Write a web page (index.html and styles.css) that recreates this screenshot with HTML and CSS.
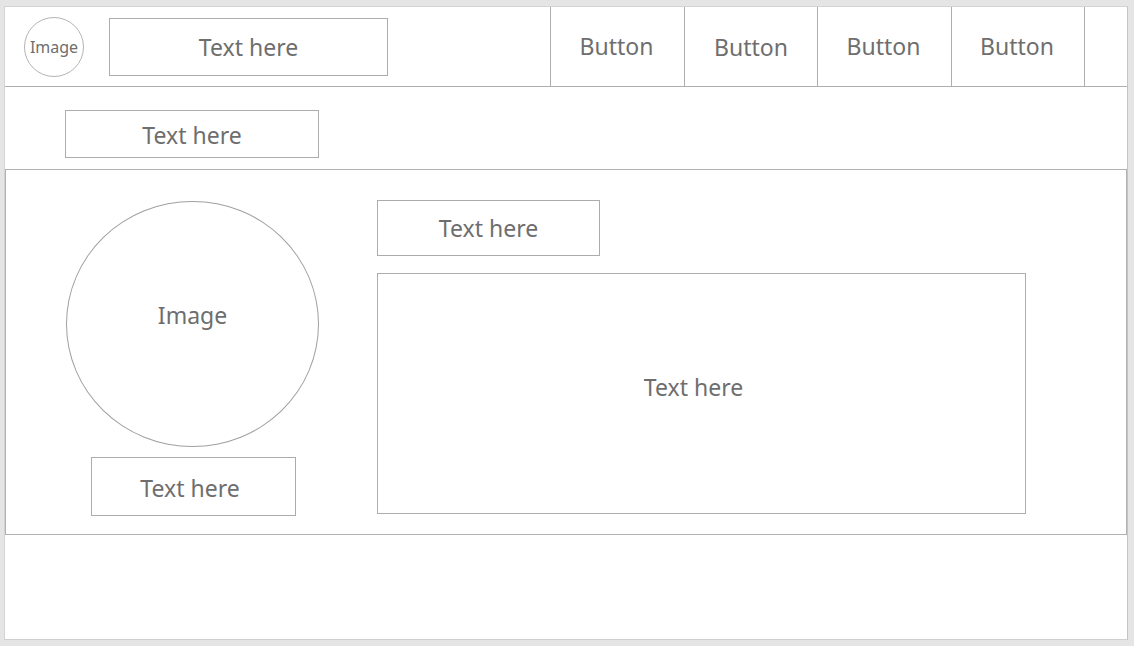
FILE: index.html
```html
<!DOCTYPE html>
<html>
<head>
<meta charset="utf-8">
<link rel="stylesheet" href="styles.css">
</head>
<body>
<div class="page">
  <header class="header">
    <div class="logo">Image</div>
    <div class="box title-box">Text here</div>
    <nav class="nav">
      <div class="nav-btn w134">Button</div>
      <div class="nav-btn w133 low">Button</div>
      <div class="nav-btn w134">Button</div>
      <div class="nav-btn w133">Button</div>
      <div class="nav-end"></div>
    </nav>
  </header>
  <div class="band">
    <div class="box band-box">Text here</div>
  </div>
  <section class="section">
    <div class="left-col">
      <div class="avatar">Image</div>
      <div class="box name-box">Text here</div>
    </div>
    <div class="right-col">
      <div class="box heading-box">Text here</div>
      <div class="box body-box">Text here</div>
    </div>
  </section>
</div>
</body>
</html>
```
FILE: styles.css
```css
html, body {
  margin: 0;
  padding: 0;
}
body {
  background: #e5e5e5;
  width: 1134px;
  height: 646px;
  overflow: hidden;
  font-family: "Noto Sans", "Open Sans", sans-serif;
  color: #6e6e6e;
}
.page {
  box-sizing: border-box;
  margin: 6px 0 0 4px;
  width: 1124px;
  height: 634px;
  background: #ffffff;
  border: 1px solid #d4d4d4;
  border-right-color: #c4c4c4;
  border-bottom-color: #cfcfcf;
}
.box {
  box-sizing: border-box;
  border: 1px solid #acacac;
  display: flex;
  align-items: center;
  justify-content: center;
  font-size: 23px;
  line-height: 1;
}
.header {
  box-sizing: border-box;
  height: 80px;
  border-bottom: 1px solid #aeaeae;
  display: flex;
  align-items: center;
  padding-left: 19px;
}
.logo {
  box-sizing: border-box;
  width: 60px;
  height: 60px;
  border: 1px solid #b4b4b4;
  border-radius: 50%;
  display: flex;
  align-items: center;
  justify-content: center;
  font-size: 16px;
  flex-shrink: 0;
}
.title-box {
  width: 279px;
  height: 58px;
  margin-left: 25px;
  margin-top: 1px;
}
.nav {
  margin-left: auto;
  display: flex;
  align-self: stretch;
}
.nav-btn {
  box-sizing: border-box;
  border-left: 1px solid #aeaeae;
  display: flex;
  align-items: center;
  justify-content: center;
  font-size: 23px;
  line-height: 1;
  padding: 0 2px 0 0;
}
.nav-btn.low {
  padding: 2px 0 0 0;
}
.w134 { width: 134px; }
.w133 { width: 133px; }
.nav-end {
  box-sizing: border-box;
  width: 43px;
  border-left: 1px solid #aeaeae;
}
.band {
  height: 82px;
  display: flex;
  align-items: flex-start;
  padding-left: 60px;
}
.band-box {
  width: 254px;
  height: 48px;
  margin-top: 23px;
  padding-top: 2px;
}
.section {
  box-sizing: border-box;
  height: 366px;
  border: 1px solid #b2b2b2;
  display: flex;
  padding: 30px 0 0 60px;
}
.left-col {
  width: 253px;
  display: flex;
  flex-direction: column;
  align-items: center;
}
.avatar {
  box-sizing: border-box;
  width: 253px;
  height: 246px;
  border: 1px solid #a0a0a0;
  border-radius: 50%;
  display: flex;
  align-items: center;
  justify-content: center;
  font-size: 23px;
  padding-bottom: 18px;
  margin-top: 1px;
}
.name-box {
  width: 205px;
  height: 59px;
  margin-top: 10px;
  margin-left: 1px;
  padding: 3px 6px 0 0;
}
.right-col {
  margin-left: 58px;
  display: flex;
  flex-direction: column;
  gap: 17px;
}
.heading-box {
  width: 223px;
  height: 56px;
  padding-top: 1px;
}
.body-box {
  width: 649px;
  height: 241px;
  padding: 0 16px 12px 0;
}
```
